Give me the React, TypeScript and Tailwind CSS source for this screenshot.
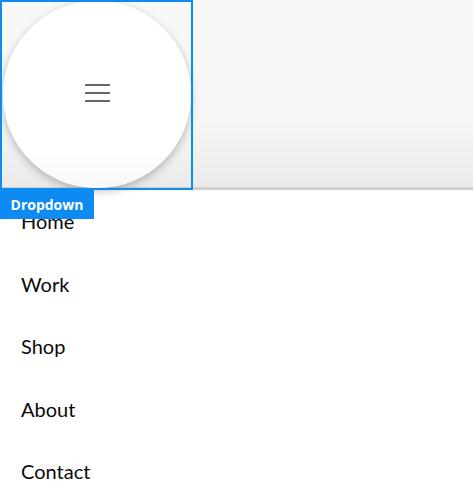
const items = ["Home", "Work", "Shop", "About", "Contact"];

export default function App() {
  return (
    <div className="min-h-[500px] bg-white font-['Lato',sans-serif] text-[#0a0a0a]">
      {/* Header bar */}
      <header className="relative h-[190px] border-b-[3px] border-[#d0d0d0] bg-gradient-to-b from-[#f8f8f8] via-[#f6f6f6] via-65% to-[#eaeaea]">
        <div className="relative h-[187px] w-[193px]">
          <button className="absolute left-[3px] top-[1px] flex h-[187px] w-[188px] items-center justify-center rounded-full bg-gradient-to-b from-white via-white via-80% to-[#f8f8f8] shadow-[0_3px_9px_rgba(0,0,0,0.26)]">
            <span className="mb-[3px] flex w-[25px] flex-col gap-[6px]">
              <span className="h-[2px] bg-[#666666]" />
              <span className="h-[2px] bg-[#666666]" />
              <span className="h-[2px] bg-[#666666]" />
            </span>
          </button>
        </div>

        {/* Inspector highlight */}
        <div className="pointer-events-none absolute left-0 top-0 z-10 h-[190px] w-[193px] border-[2px] border-[#0d8bf2]" />
        <div className="absolute left-0 top-[189px] z-10 flex h-[30px] w-[94px] items-center justify-center bg-[#0d8bf2] font-['Open_Sans',sans-serif] text-[14px] font-bold text-white">
          Dropdown
        </div>
      </header>

      {/* Menu */}
      <ul>
        {items.map((item) => (
          <li key={item} className="h-[62.5px] px-[21px] text-[20px] leading-[62.5px]">
            {item}
          </li>
        ))}
      </ul>
    </div>
  );
}
